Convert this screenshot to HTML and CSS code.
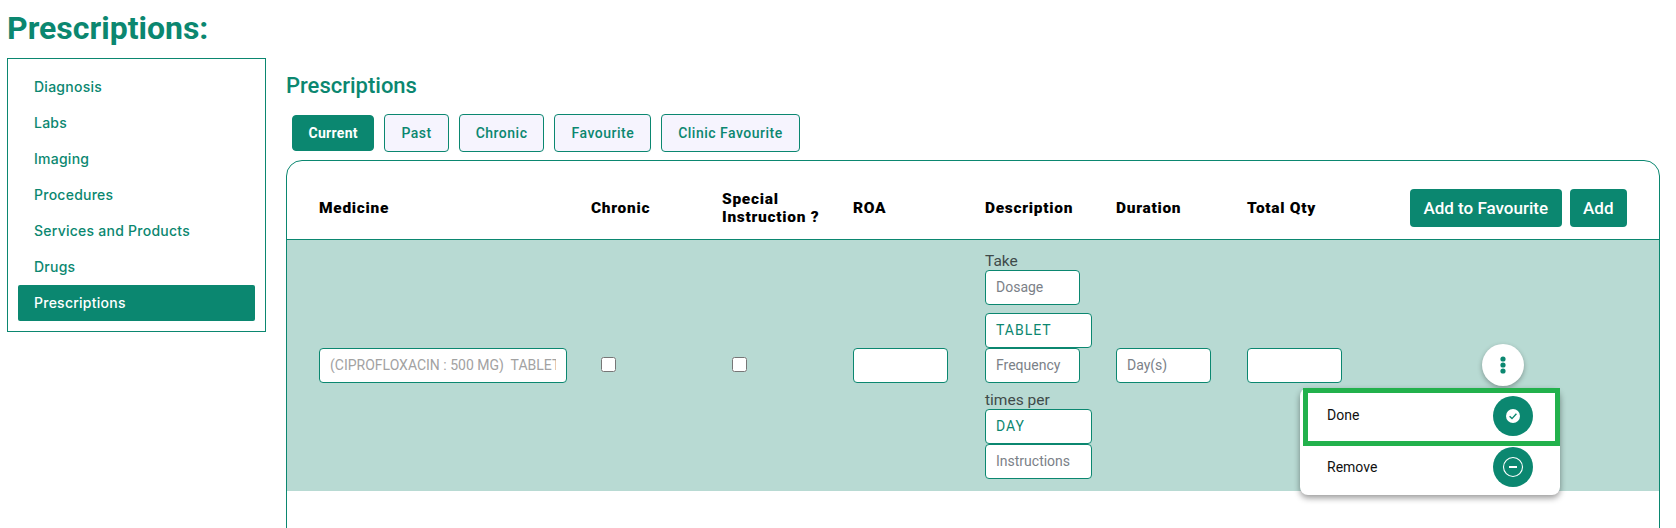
FILE: index.html
```html
<!DOCTYPE html>
<html lang="en">
<head>
<meta charset="utf-8">
<title>Prescriptions</title>
<link rel="stylesheet" href="styles.css">
</head>
<body>
<h1 class="page-title">Prescriptions:</h1>
<div class="layout">
  <nav class="side">
    <a class="side-item">Diagnosis</a>
    <a class="side-item">Labs</a>
    <a class="side-item">Imaging</a>
    <a class="side-item">Procedures</a>
    <a class="side-item">Services and Products</a>
    <a class="side-item">Drugs</a>
    <a class="side-item active">Prescriptions</a>
  </nav>
  <main class="main">
    <h2 class="section-title">Prescriptions</h2>
    <div class="tabs">
      <button class="tab current">Current</button>
      <button class="tab">Past</button>
      <button class="tab">Chronic</button>
      <button class="tab">Favourite</button>
      <button class="tab">Clinic Favourite</button>
    </div>
    <section class="card">
      <div class="grid head">
        <div>Medicine</div>
        <div>Chronic</div>
        <div>Special<br>Instruction ?</div>
        <div>ROA</div>
        <div>Description</div>
        <div>Duration</div>
        <div>Total Qty</div>
        <div class="head-actions">
          <button class="btn">Add to Favourite</button>
          <button class="btn">Add</button>
        </div>
      </div>
      <div class="grid row">
        <div><input class="field med" type="text" readonly value="(CIPROFLOXACIN : 500 MG)  TABLET"></div>
        <div><input class="check" type="checkbox"></div>
        <div><input class="check" type="checkbox"></div>
        <div><input class="field short" type="text"></div>
        <div class="desc">
          <div class="desc-label">Take</div>
          <input class="field short" type="text" placeholder="Dosage">
          <div class="field wide pick spaced">TABLET</div>
          <input class="field short" type="text" placeholder="Frequency">
          <div class="desc-label spaced-label">times per</div>
          <div class="field wide pick">DAY</div>
          <input class="field wide" type="text" placeholder="Instructions">
        </div>
        <div><input class="field short" type="text" placeholder="Day(s)"></div>
        <div><input class="field short" type="text"></div>
        <div class="row-actions">
          <div class="kebab-wrap">
            <button class="kebab" aria-label="More">
              <svg width="6" height="18" viewBox="0 0 6 18"><circle cx="3" cy="3" r="2.6"/><circle cx="3" cy="9" r="2.6"/><circle cx="3" cy="15" r="2.6"/></svg>
            </button>
            <div class="menu">
              <div class="menu-item done">
                <span class="menu-label">Done</span>
                <span class="menu-icon">
                  <svg width="40" height="40" viewBox="0 0 40 40"><circle cx="20" cy="20" r="7" fill="#fff"/><path d="M16.6 20.2l2.4 2.4 4.4-4.8" fill="none" stroke="#0b8770" stroke-width="1.4"/></svg>
                </span>
              </div>
              <div class="menu-item remove">
                <span class="menu-label">Remove</span>
                <span class="menu-icon">
                  <svg width="40" height="40" viewBox="0 0 40 40"><circle cx="20" cy="20" r="9.5" fill="none" stroke="#fff" stroke-width="1.1"/><path d="M16 20h8" stroke="#fff" stroke-width="2"/></svg>
                </span>
              </div>
            </div>
          </div>
        </div>
      </div>
    </section>
  </main>
</div>
</body>
</html>
```

FILE: styles.css
```css
* { box-sizing: border-box; }
html, body { margin: 0; padding: 0; background: #fff; }
body {
  height: 528px;
  overflow: hidden;
  font-family: Roboto, "Liberation Sans", sans-serif;
  color: #0b8770;
}
.page-title {
  margin: 0;
  padding: 9px 0 0 7px;
  height: 58px;
  font-size: 32px;
  line-height: 38px;
  font-weight: 700;
}
.layout { display: flex; gap: 20px; align-items: flex-start; padding-left: 7px; }
.side {
  width: 259px;
  height: 274px;
  border: 1px solid #0b8770;
  padding: 10px;
  display: flex;
  flex-direction: column;
  flex: none;
}
.side-item {
  height: 36px;
  line-height: 36px;
  padding-left: 16px;
  font-family: Inter, sans-serif;
  font-size: 14px;
  font-weight: 500;
  letter-spacing: .25px;
  border-radius: 2px;
}
.side-item.active { background: #0b8770; color: #fff; }
.main { width: 1374px; flex: none; }
.section-title {
  margin: 0;
  padding-top: 15px;
  height: 56px;
  font-size: 22px;
  line-height: 26px;
  font-weight: 500;
}
.tabs { display: flex; align-items: center; gap: 10px; height: 38px; padding-left: 6px; }
.tab {
  height: 38px;
  padding: 0 16px;
  border: 1px solid #0b8770;
  border-radius: 4px;
  background: #f6f4fe;
  color: #0b8770;
  font-family: Roboto, sans-serif;
  font-size: 14px;
  font-weight: 500;
  letter-spacing: .5px;
}
.tab.current { height: 36px; padding: 0 15.5px; background: #0b8770; color: #fff; font-weight: 700; letter-spacing: .3px; }
.card {
  margin-top: 8px;
  height: 420px;
  border: 1px solid #0b8770;
  border-radius: 16px;
}
.grid {
  display: grid;
  grid-template-columns: 272px 131px 131px 132px 131px 131px 131px 1fr;
  padding: 0 32px;
  align-items: center;
}
.head {
  height: 79px;
  padding-top: 15px;
  border-bottom: 1px solid #0b8770;
  color: #000;
  font-size: 15.5px;
  line-height: 18px;
  font-weight: 900;
  letter-spacing: .7px;
}
.head-actions { display: flex; justify-content: flex-end; gap: 8px; margin-left: -100px; letter-spacing: 0; }
.btn {
  height: 38px;
  padding: 0 13.5px;
  border: 0;
  border-radius: 4px;
  background: #0b8770;
  color: #fff;
  font-family: Roboto, sans-serif;
  font-size: 17px;
  font-weight: 500;
}
.row { height: 251px; background: #b8dad3; }
.field {
  display: block;
  height: 35px;
  padding: 0 10px 2px;
  border: 1px solid #0b8770;
  border-radius: 4px;
  background: #fff;
  font-family: Roboto, sans-serif;
  font-size: 14px;
  line-height: 31px;
  color: #495057;
  outline: none;
}
.field::placeholder { color: #7b8188; opacity: 1; }
.med { width: 248px; color: #a2a2a2; }
.short { width: 95px; }
.wide { width: 107px; }
.pick { color: #0b8770; letter-spacing: 1px; line-height: 33px; }
.check {
  display: block;
  width: 15px;
  height: 15px;
  margin: -2px 0 0 10px;
}
.desc { display: flex; flex-direction: column; margin-top: -1px; }
.desc-label { height: 19px; font-size: 15.5px; line-height: 21px; color: #3f4a4a; }
.spaced { margin-top: 8px; }
.spaced-label { margin-top: 7px; }
.row-actions { display: flex; justify-content: flex-end; padding-right: 103px; }
.kebab-wrap { position: relative; width: 42px; height: 42px; margin-top: -1px; }
.kebab {
  width: 42px;
  height: 42px;
  padding: 0;
  border: 0;
  border-radius: 50%;
  background: #fff;
  box-shadow: 0 2px 5px rgba(0, 0, 0, .3);
  display: flex;
  align-items: center;
  justify-content: center;
}
.kebab svg { fill: #0b8770; }
.menu {
  position: absolute;
  top: 44px;
  right: -36px;
  width: 260px;
  height: 107px;
  background: #fff;
  border-radius: 8px;
  box-shadow: 0 3px 6px rgba(0, 0, 0, .4);
  color: #111;
  font-size: 14px;
}
.menu-item { display: flex; align-items: center; justify-content: space-between; }
.done {
  margin-left: 3px;
  height: 58px;
  padding: 0 22px 2px 19px;
  border: 5px solid #22b14c;
}
.done .menu-label { margin-bottom: 3px; }
.remove { height: 49px; padding: 0 27px 7px 27px; }
.remove .menu-label { margin-bottom: 1px; }
.menu-icon {
  width: 40px;
  height: 40px;
  border-radius: 50%;
  background: #0b8770;
  display: block;
}
.menu-icon svg { display: block; }
```
